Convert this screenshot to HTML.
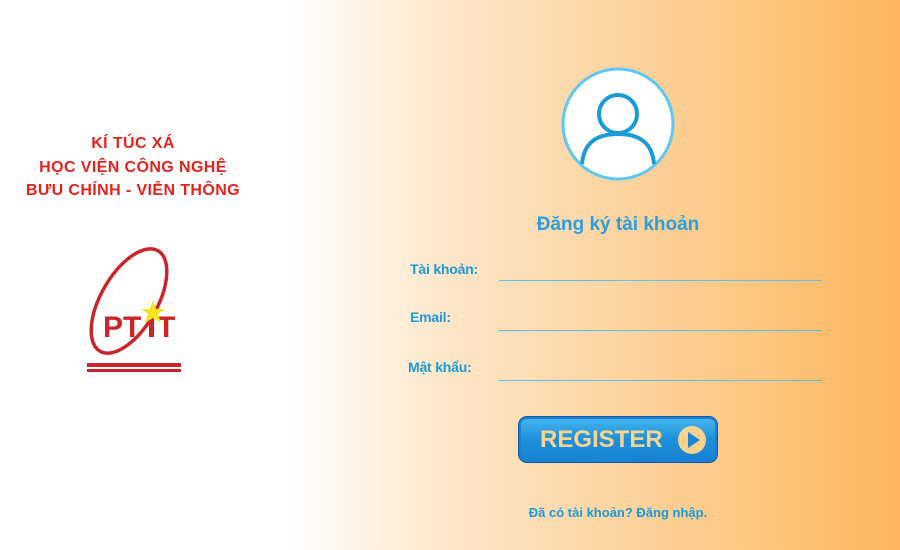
<!DOCTYPE html>
<html><head><meta charset="utf-8"><style>
body{margin:0;width:900px;height:550px;overflow:hidden;font-family:"Liberation Sans",sans-serif;
background:linear-gradient(90deg,#fff 0,#fff 290px,#fde6c8 450px,#fdd19a 650px,#fdb65c 900px);position:relative}
.t{position:absolute;left:0;width:266px;text-align:center;color:#e3231c;font-weight:bold;font-size:16px;line-height:23.5px;top:132px;letter-spacing:0.4px}
.lab{position:absolute;color:#1a9ad6;font-weight:bold;font-size:14px;letter-spacing:-0.2px}
.ln{position:absolute;left:499px;width:323px;height:1px;background:#5bc0ee}
.btn{position:absolute;left:518px;top:416px;width:198px;height:45px;border-radius:9px;border:1px solid #0b5ca8;
background:linear-gradient(#45b8f0,#1e90dc 50%,#1582d2);box-shadow:inset 0 0 0 2px #1e7fd0}
.btn span{position:absolute;left:21px;top:9px;font-size:24px;font-weight:bold;color:#fcd38c;letter-spacing:0px}
</style></head><body>
<div class="t">KÍ TÚC XÁ<br>HỌC VIỆN CÔNG NGHỆ<br>BƯU CHÍNH - VIỄN THÔNG</div>
<svg style="position:absolute;left:85px;top:245px" width="100" height="130" viewBox="0 0 100 130">
<ellipse cx="44" cy="56" rx="28" ry="58" transform="rotate(30 44 56)" fill="none" stroke="#c9252a" stroke-width="3.5"/>
<text x="18" y="92" font-family="Liberation Sans" font-size="30" font-weight="bold" fill="#c9252a">PT</text>
<text x="72" y="92" font-family="Liberation Sans" font-size="30" font-weight="bold" fill="#c9252a">T</text>
<rect x="64" y="72" width="5" height="20" fill="#c9252a"/>
<polygon points="68,55 71,64 80,64 73,69 76,78 68,73 60,78 63,69 56,64 65,64" fill="#f6e51d"/>
<rect x="2" y="118" width="94" height="4" fill="#c9252a"/><rect x="2" y="124" width="94" height="3" fill="#c9252a"/>
</svg>
<svg style="position:absolute;left:560px;top:66px" width="116" height="116" viewBox="0 0 116 116">
<circle cx="58" cy="58" r="55" fill="#fff" stroke="#5bc8f5" stroke-width="3"/>
<circle cx="58" cy="48" r="19" fill="none" stroke="#1a9ad6" stroke-width="4"/>
<path d="M22 98 C24 74 40 68 58 68 C76 68 92 74 94 98" fill="none" stroke="#1a9ad6" stroke-width="4"/>
</svg>
<div style="position:absolute;left:500px;width:236px;text-align:center;top:214px;color:#2a9fe0;font-weight:bold;font-size:19px">Đăng ký tài khoản</div>
<div class="lab" style="left:410px;top:261px">Tài khoản:</div>
<div class="lab" style="left:410px;top:309px">Email:</div>
<div class="lab" style="left:408px;top:359px">Mật khẩu:</div>
<div class="ln" style="top:280px"></div><div class="ln" style="top:330px"></div><div class="ln" style="top:380px"></div>
<div class="btn"><span>REGISTER</span>
<svg style="position:absolute;left:158px;top:8px" width="30" height="30"><circle cx="15" cy="15" r="14" fill="#fcd38c"/><polygon points="11,7 23,15 11,23" fill="#1a86d4"/></svg></div>
<div style="position:absolute;left:500px;width:236px;text-align:center;top:505px;color:#1a9ad6;font-weight:bold;font-size:13px">Đã có tài khoản? Đăng nhập.</div>
</body></html>
